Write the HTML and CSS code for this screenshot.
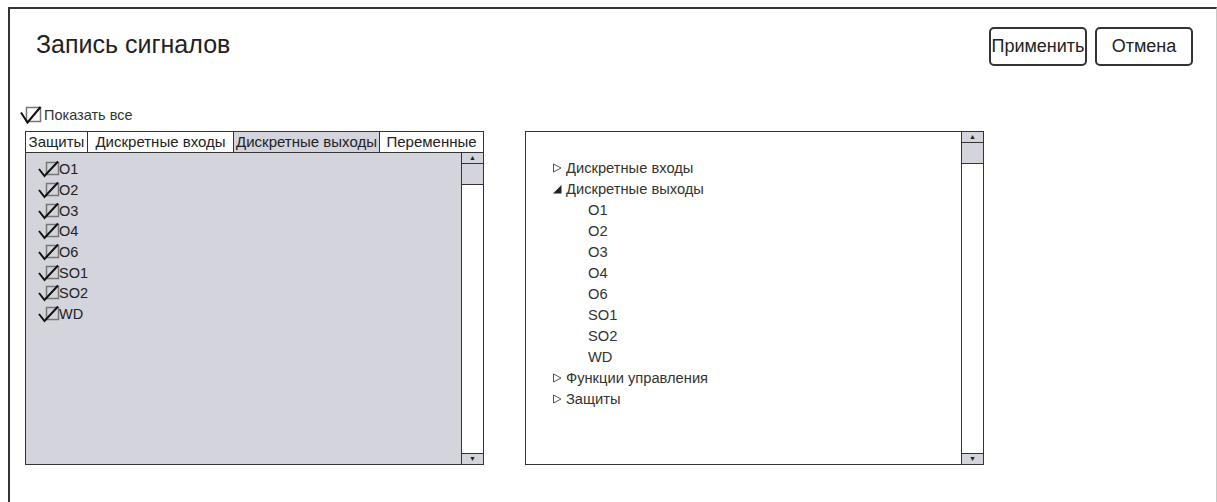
FILE: index.html
```html
<!DOCTYPE html>
<html>
<head>
<meta charset="utf-8">
<title>Запись сигналов</title>
<link rel="stylesheet" href="styles.css">
</head>
<body>
<div class="window">
  <div class="header">
    <h1>Запись сигналов</h1>
    <div class="buttons">
      <button class="btn">Применить</button>
      <button class="btn">Отмена</button>
    </div>
  </div>

  <div class="showall">
    <svg class="check" width="22" height="18" viewBox="0 0 22 18"><rect x="6.5" y="1.5" width="14" height="14" fill="none" stroke="#777" stroke-width="1.5"/><polyline points="1,6.5 7.5,16.5 20.5,1" fill="none" stroke="#111" stroke-width="2"/></svg>
    <span>Показать все</span>
  </div>

  <div class="panels">
    <div class="leftpanel">
      <div class="tabs">
        <div class="tab t1">Защиты</div>
        <div class="tab t2">Дискретные входы</div>
        <div class="tab t3 active">Дискретные выходы</div>
        <div class="tab t4">Переменные</div>
      </div>
      <div class="body">
        <div class="list">
          <div class="item"><svg class="check" width="21" height="18" viewBox="0 0 21 18"><rect x="8.5" y="2.5" width="12" height="12" fill="none" stroke="#777" stroke-width="1.5"/><polyline points="1,9 6.5,16 20,1.5" fill="none" stroke="#111" stroke-width="2"/></svg>O1</div>
          <div class="item"><svg class="check" width="21" height="18" viewBox="0 0 21 18"><rect x="8.5" y="2.5" width="12" height="12" fill="none" stroke="#777" stroke-width="1.5"/><polyline points="1,9 6.5,16 20,1.5" fill="none" stroke="#111" stroke-width="2"/></svg>O2</div>
          <div class="item"><svg class="check" width="21" height="18" viewBox="0 0 21 18"><rect x="8.5" y="2.5" width="12" height="12" fill="none" stroke="#777" stroke-width="1.5"/><polyline points="1,9 6.5,16 20,1.5" fill="none" stroke="#111" stroke-width="2"/></svg>O3</div>
          <div class="item"><svg class="check" width="21" height="18" viewBox="0 0 21 18"><rect x="8.5" y="2.5" width="12" height="12" fill="none" stroke="#777" stroke-width="1.5"/><polyline points="1,9 6.5,16 20,1.5" fill="none" stroke="#111" stroke-width="2"/></svg>O4</div>
          <div class="item"><svg class="check" width="21" height="18" viewBox="0 0 21 18"><rect x="8.5" y="2.5" width="12" height="12" fill="none" stroke="#777" stroke-width="1.5"/><polyline points="1,9 6.5,16 20,1.5" fill="none" stroke="#111" stroke-width="2"/></svg>O6</div>
          <div class="item"><svg class="check" width="21" height="18" viewBox="0 0 21 18"><rect x="8.5" y="2.5" width="12" height="12" fill="none" stroke="#777" stroke-width="1.5"/><polyline points="1,9 6.5,16 20,1.5" fill="none" stroke="#111" stroke-width="2"/></svg>SO1</div>
          <div class="item"><svg class="check" width="21" height="18" viewBox="0 0 21 18"><rect x="8.5" y="2.5" width="12" height="12" fill="none" stroke="#777" stroke-width="1.5"/><polyline points="1,9 6.5,16 20,1.5" fill="none" stroke="#111" stroke-width="2"/></svg>SO2</div>
          <div class="item"><svg class="check" width="21" height="18" viewBox="0 0 21 18"><rect x="8.5" y="2.5" width="12" height="12" fill="none" stroke="#777" stroke-width="1.5"/><polyline points="1,9 6.5,16 20,1.5" fill="none" stroke="#111" stroke-width="2"/></svg>WD</div>
        </div>
        <div class="scroll">
          <div class="sbtn up">&#9650;</div>
          <div class="thumb"></div>
          <div class="track"></div>
          <div class="sbtn down">&#9660;</div>
        </div>
      </div>
    </div>

    <div class="rightpanel">
      <div class="tree">
        <div class="node"><svg class="arrow" width="14" height="10" viewBox="0 0 14 10"><polygon points="1.5,1 9,5 1.5,9" fill="none" stroke="#555"/></svg>Дискретные входы</div>
        <div class="node"><svg class="arrow" width="14" height="10" viewBox="0 0 14 10"><polygon points="1,9.5 9.5,9.5 9.5,1" fill="#222"/></svg>Дискретные выходы</div>
        <div class="node child">O1</div>
        <div class="node child">O2</div>
        <div class="node child">O3</div>
        <div class="node child">O4</div>
        <div class="node child">O6</div>
        <div class="node child">SO1</div>
        <div class="node child">SO2</div>
        <div class="node child">WD</div>
        <div class="node"><svg class="arrow" width="14" height="10" viewBox="0 0 14 10"><polygon points="1.5,1 9,5 1.5,9" fill="none" stroke="#555"/></svg>Функции управления</div>
        <div class="node"><svg class="arrow" width="14" height="10" viewBox="0 0 14 10"><polygon points="1.5,1 9,5 1.5,9" fill="none" stroke="#555"/></svg>Защиты</div>
      </div>
      <div class="scroll">
        <div class="sbtn up">&#9650;</div>
        <div class="thumb"></div>
        <div class="track"></div>
        <div class="sbtn down">&#9660;</div>
      </div>
    </div>
  </div>
</div>
</body>
</html>
```

FILE: styles.css
```css
html {
  overflow: hidden;
}

body {
  margin: 0;
  background: #fff;
  font-family: "Liberation Sans", Arial, sans-serif;
  color: #222;
}

.window {
  margin: 7px 0 0 8px;
  width: 1209px;
  height: 520px;
  box-sizing: border-box;
  border-top: 2px solid #333;
  border-left: 2px solid #333;
  border-right: 1px solid #c8c8c8;
}

.header {
  display: flex;
  justify-content: space-between;
  align-items: flex-start;
  padding: 18px 23px 0 26px;
}

.header h1 {
  margin: 3px 0 0;
  font-size: 25px;
  font-weight: normal;
  line-height: 29px;
  color: #222;
}

.buttons {
  display: flex;
  gap: 8px;
}

.btn {
  width: 98px;
  height: 39px;
  padding: 0;
  background: #fff;
  border: 2px solid #333;
  border-radius: 5px;
  font-family: "Liberation Sans", Arial, sans-serif;
  font-size: 18px;
  color: #222;
}

.showall {
  display: flex;
  align-items: center;
  gap: 2px;
  height: 18px;
  margin-top: 40px;
  padding-left: 10px;
  font-size: 14.5px;
  color: #333;
}

.panels {
  display: flex;
  gap: 41px;
  margin-top: 7px;
  padding-left: 15px;
}

.leftpanel,
.rightpanel {
  width: 459px;
  height: 334px;
  box-sizing: border-box;
  border: 1px solid #333;
}

.leftpanel {
  display: flex;
  flex-direction: column;
}

.tabs {
  display: flex;
  height: 20px;
  border-bottom: 1px solid #333;
  font-size: 15px;
  line-height: 20px;
  color: #222;
}

.tab {
  text-align: center;
  border-right: 1px solid #333;
  white-space: nowrap;
}

.t1 { width: 61px; }
.t2 { width: 145px; }
.t3 { width: 145px; }
.t4 { flex: 1; border-right: none; }

.tab.active {
  background: #d3d4dc;
}

.body {
  flex: 1;
  display: flex;
  background: #d3d4dc;
}

.list {
  flex: 1;
  padding: 6px 0 0 12px;
}

.item {
  display: flex;
  align-items: center;
  height: 20.7px;
  font-size: 14.5px;
  color: #222;
}

.check {
  display: block;
  flex: none;
  overflow: visible;
}

.scroll {
  width: 21px;
  display: flex;
  flex-direction: column;
  border-left: 1px solid #333;
  background: #fff;
}

.sbtn {
  height: 10px;
  background: #d3d4dc;
  font-size: 7px;
  line-height: 10px;
  text-align: center;
  color: #222;
}

.up {
  border-bottom: 1px solid #333;
}

.down {
  border-top: 1px solid #333;
}

.thumb {
  height: 20px;
  background: #d3d4dc;
  border-bottom: 1px solid #333;
}

.track {
  flex: 1;
}

.rightpanel {
  display: flex;
}

.tree {
  flex: 1;
  padding: 25px 0 0 26px;
}

.node {
  display: flex;
  align-items: center;
  height: 21px;
  font-size: 14.7px;
  color: #333;
}

.node .arrow {
  display: block;
}

.node.child {
  padding-left: 36px;
}
```
